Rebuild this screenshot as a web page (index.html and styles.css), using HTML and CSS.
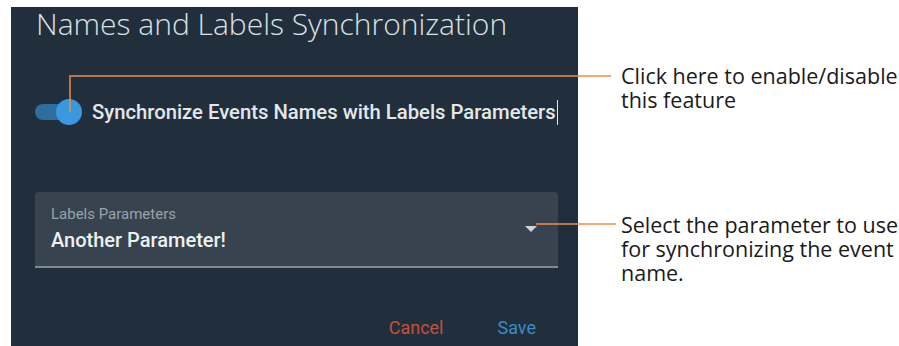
FILE: index.html
```html
<!DOCTYPE html>
<html lang="en">
<head>
    <meta charset="UTF-8">
    <meta name="viewport" content="width=device-width, initial-scale=1.0">
    <title>Names and Labels Synchronization</title>
    <link rel="stylesheet" href="styles.css">
</head>
<body>
    <div class="page">
        <div class="dialog">
            <h1 class="dialog-title">Names and Labels Synchronization</h1>

            <div class="switch-row">
                <span class="switch">
                    <span class="switch-track"></span>
                    <span class="switch-thumb"></span>
                </span>
                <span class="switch-label">Synchronize Events Names with Labels Parameters</span>
                <span class="caret"></span>
            </div>

            <div class="select">
                <div class="select-text">
                    <div class="select-label">Labels Parameters</div>
                    <div class="select-value">Another Parameter!</div>
                </div>
                <span class="select-arrow"></span>
            </div>

            <div class="actions">
                <span class="btn btn-cancel">Cancel</span>
                <span class="btn btn-save">Save</span>
            </div>
        </div>

        <div class="notes">
            <p class="note note-switch">Click here to enable/disable this feature</p>
            <p class="note note-select">Select the parameter to use for synchronizing the event name.</p>
        </div>

        <!-- callout lines -->
        <div class="pointer pointer-switch-v"></div>
        <div class="pointer pointer-switch-h"></div>
        <div class="pointer pointer-select"></div>
    </div>
</body>
</html>
```

FILE: styles.css
```css
body {
    margin: 0;
    background: #ffffff;
    font-family: Roboto, "Liberation Sans", sans-serif;
}
.page {
    position: relative;
    display: flex;
    padding: 7px 0 0 11px;
    height: 339px;
    overflow: hidden;
}
.dialog {
    width: 567px;
    min-height: 345px;
    box-sizing: border-box;
    padding: 2px 20px 0 24px;
    background: #212f3d;
    flex-shrink: 0;
}
.dialog-title {
    margin: 0 0 0 1px;
    font-family: "Open Sans", sans-serif;
    font-weight: 300;
    font-size: 30px;
    line-height: 30px;
    color: #dbe0e4;
    white-space: nowrap;
}
.switch-row {
    display: flex;
    align-items: center;
    margin-top: 60px;
    height: 26px;
}
.switch {
    position: relative;
    width: 47px;
    height: 26px;
    flex-shrink: 0;
}
.switch-track {
    position: absolute;
    left: 0;
    top: 5px;
    width: 40px;
    height: 16px;
    border-radius: 8px;
    background: #2e6d9f;
}
.switch-thumb {
    position: absolute;
    left: 21px;
    top: 0;
    width: 26px;
    height: 26px;
    border-radius: 50%;
    background: #3a98df;
}
.switch-label {
    margin-left: 10px;
    font-size: 20.25px;
    font-weight: 500;
    color: #e4e7ea;
    white-space: nowrap;
}
.caret {
    width: 1px;
    height: 25px;
    margin-left: 1px;
    background: #e4e7ea;
}
.select {
    display: flex;
    align-items: center;
    margin-top: 67px;
    padding: 13px 21px 14px 16px;
    background: #37444f;
    border-radius: 4px 4px 0 0;
    border-bottom: 2px solid #7f8a93;
}
.select-text {
    flex: 1;
}
.select-label {
    font-size: 15px;
    line-height: 18px;
    color: #98a2ab;
}
.select-value {
    margin-top: 5px;
    font-size: 20px;
    line-height: 24px;
    font-weight: 500;
    color: #eef0f2;
}
.select-arrow {
    width: 0;
    height: 0;
    border-left: 6px solid transparent;
    border-right: 6px solid transparent;
    border-top: 6px solid #cfd4d9;
}
.actions {
    display: flex;
    justify-content: flex-end;
    gap: 54px;
    margin-top: 50px;
    padding-right: 22px;
}
.btn {
    font-size: 18px;
    line-height: 20px;
}
.btn-cancel {
    color: #c4503f;
}
.btn-save {
    color: #3a8bc9;
}
.notes {
    margin-left: 43px;
    padding-top: 57px;
    width: 278px;
}
.note {
    margin: 0;
    font-family: "Open Sans", sans-serif;
    font-size: 21.5px;
    line-height: 24px;
    color: #1a1a1a;
}
.note-select {
    margin-top: 101px;
}
.pointer {
    position: absolute;
    background: rgba(240, 140, 70, 0.75);
}
.pointer-switch-v {
    left: 69px;
    top: 77px;
    width: 2px;
    height: 35px;
}
.pointer-switch-h {
    left: 69px;
    top: 75px;
    width: 542px;
    height: 2px;
}
.pointer-select {
    left: 536px;
    top: 223px;
    width: 80px;
    height: 2px;
}
```
